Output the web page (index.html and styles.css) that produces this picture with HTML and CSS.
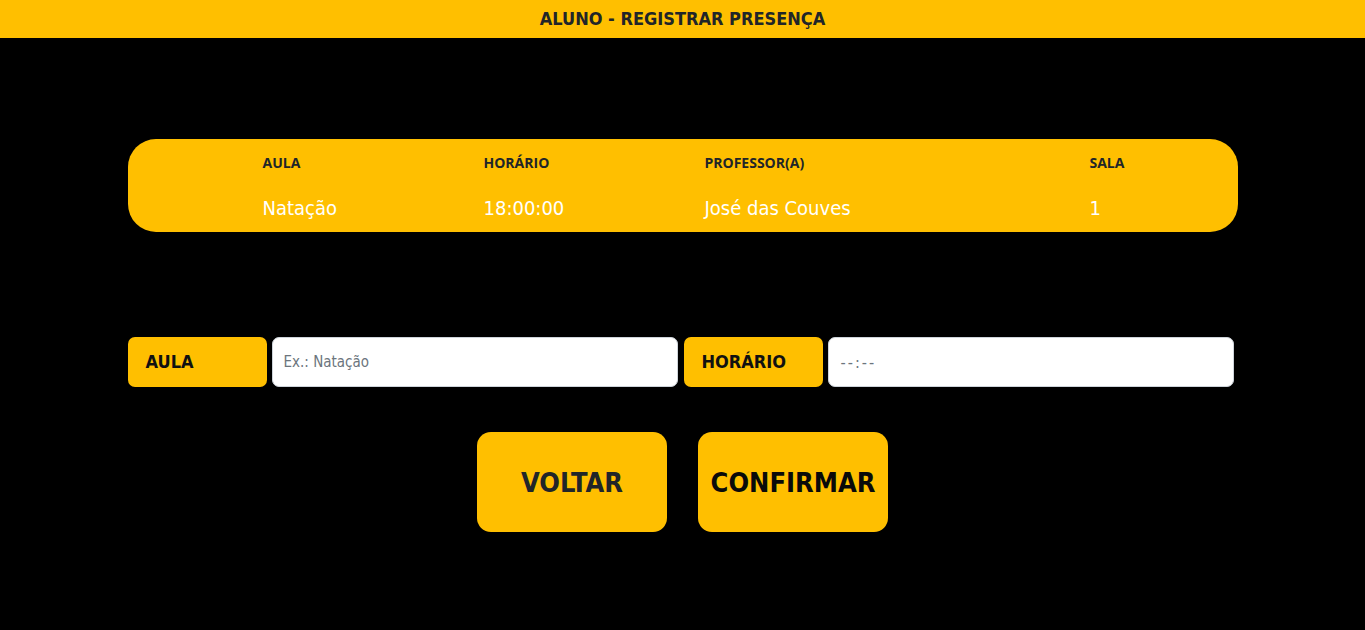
FILE: index.html
```html
<!DOCTYPE html>
<html lang="pt-BR">
<head>
<meta charset="utf-8">
<title>Aluno - Registrar Presença</title>
<link rel="stylesheet" href="styles.css">
</head>
<body>
<header class="topbar">ALUNO - REGISTRAR PRESENÇA</header>
<main class="container">
  <section class="card">
    <div class="grid head">
      <span></span><span>AULA</span><span>HORÁRIO</span><span>PROFESSOR(A)</span><span>SALA</span>
    </div>
    <div class="grid data">
      <span></span><span>Natação</span><span>18:00:00</span><span>José das Couves</span><span>1</span>
    </div>
  </section>
  <form class="form-row">
    <label class="tag">AULA</label>
    <input class="field" type="text" placeholder="Ex.: Natação">
    <label class="tag">HORÁRIO</label>
    <div class="field time">--:--</div>
  </form>
  <div class="actions">
    <button class="btn voltar" type="button">VOLTAR</button>
    <button class="btn confirmar" type="button">CONFIRMAR</button>
  </div>
</main>
</body>
</html>
```
FILE: styles.css
```css
html, body {
  margin: 0;
  padding: 0;
  background: #000;
  height: 100%;
}
body {
  font-family: "DejaVu Sans Condensed", "DejaVu Sans", sans-serif;
}
.topbar {
  height: 38px;
  background: #ffbf00;
  color: #212529;
  font-size: 18px;
  font-weight: 700;
  line-height: 38px;
  text-align: center;
}
.container {
  width: 1110px;
  margin: 0 auto;
  padding-top: 101px;
}
.card {
  background: #ffbf00;
  border-radius: 28px;
  height: 93px;
  box-sizing: border-box;
  padding-top: 14px;
}
.grid {
  display: grid;
  grid-template-columns: 135px 221px 221px 385px 1fr;
}
.head {
  font-family: "Open Sans", sans-serif;
  font-weight: 700;
  font-size: 14px;
  color: #212529;
  height: 20px;
  line-height: 20px;
}
.data {
  margin-top: 23px;
  color: #fff;
  font-size: 20px;
  line-height: 24px;
}
.form-row {
  display: flex;
  margin-top: 105px;
  gap: 5px;
  height: 50px;
}
.tag {
  width: 139px;
  background: #ffbf00;
  border-radius: 7px;
  color: #111;
  font-size: 18px;
  font-weight: 700;
  line-height: 50px;
  padding-left: 18px;
  box-sizing: border-box;
}
.field {
  width: 406px;
  background: #fff;
  border: 1px solid #ced4da;
  border-radius: 7px;
  box-sizing: border-box;
  padding: 0 11px;
  font-family: inherit;
  font-size: 15px;
  color: #495057;
  outline: none;
}
.field::placeholder {
  color: #6c757d;
}
.tag + .field + .tag {
  margin-left: 1px;
}
.time {
  display: flex;
  align-items: center;
  font-size: 16px;
  letter-spacing: 2px;
  color: #6c757d;
  padding-left: 12px;
}
.actions {
  display: flex;
  justify-content: center;
  gap: 31px;
  margin-top: 45px;
}
.btn {
  width: 190px;
  height: 100px;
  background: #ffbf00;
  border: none;
  border-radius: 14px;
  font-family: inherit;
  font-size: 27px;
  font-weight: 700;
  color: #212529;
  padding: 0;
}
.confirmar {
  color: #0a0a0a;
}
```
